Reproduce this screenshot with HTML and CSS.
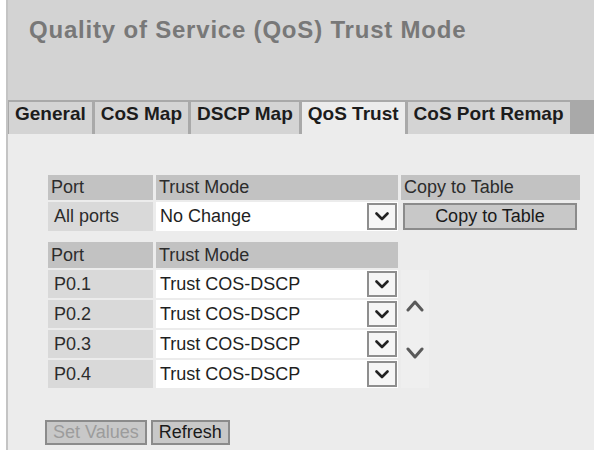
FILE: index.html
```html
<!DOCTYPE html>
<html lang="en">
<head>
<meta charset="utf-8">
<title>Quality of Service (QoS) Trust Mode</title>
<link rel="stylesheet" href="styles.css">
</head>
<body>
<div class="page">
  <header class="head">
    <h1 class="title">Quality of Service (QoS) Trust Mode</h1>
  </header>

  <nav class="tabs">
    <a class="tab">General</a>
    <a class="tab">CoS Map</a>
    <a class="tab">DSCP Map</a>
    <a class="tab active">QoS Trust</a>
    <a class="tab">CoS Port Remap</a>
  </nav>

  <main class="content">
    <div class="grid grid-all">
      <div class="th">Port</div>
      <div class="th">Trust Mode</div>
      <div class="th">Copy to Table</div>

      <div class="td port">All ports</div>
      <div class="td field">
        <div class="select"><span class="value">No Change</span><span class="arrow"><svg viewBox="0 0 14 9" width="14" height="9"><polyline points="1.5,1.5 7,7 12.5,1.5"/></svg></span></div>
      </div>
      <div class="td field">
        <button class="btn btn-copy" type="button">Copy to Table</button>
      </div>
    </div>

    <div class="grid grid-ports">
      <div class="th col-port">Port</div>
      <div class="th col-mode">Trust Mode</div>

      <div class="td port col-port">P0.1</div>
      <div class="td field col-mode">
        <div class="select"><span class="value">Trust COS-DSCP</span><span class="arrow"><svg viewBox="0 0 14 9" width="14" height="9"><polyline points="1.5,1.5 7,7 12.5,1.5"/></svg></span></div>
      </div>

      <div class="td port col-port">P0.2</div>
      <div class="td field col-mode">
        <div class="select"><span class="value">Trust COS-DSCP</span><span class="arrow"><svg viewBox="0 0 14 9" width="14" height="9"><polyline points="1.5,1.5 7,7 12.5,1.5"/></svg></span></div>
      </div>

      <div class="td port col-port">P0.3</div>
      <div class="td field col-mode">
        <div class="select"><span class="value">Trust COS-DSCP</span><span class="arrow"><svg viewBox="0 0 14 9" width="14" height="9"><polyline points="1.5,1.5 7,7 12.5,1.5"/></svg></span></div>
      </div>

      <div class="td port col-port">P0.4</div>
      <div class="td field col-mode">
        <div class="select"><span class="value">Trust COS-DSCP</span><span class="arrow"><svg viewBox="0 0 14 9" width="14" height="9"><polyline points="1.5,1.5 7,7 12.5,1.5"/></svg></span></div>
      </div>

      <div class="scroller">
        <svg class="chev" viewBox="0 0 18 13" width="18" height="13"><polyline points="2,11 9,3 16,11"/></svg>
        <svg class="chev" viewBox="0 0 18 13" width="18" height="13"><polyline points="2,2 9,10 16,2"/></svg>
      </div>
    </div>

    <div class="actions">
      <button class="btn" type="button" disabled>Set Values</button>
      <button class="btn" type="button">Refresh</button>
    </div>
  </main>
</div>
</body>
</html>
```

FILE: styles.css
```css
html, body {
  margin: 0;
  background: #ffffff;
}

body {
  font-family: "Liberation Sans", Arial, sans-serif;
  color: #2a2a2a;
}

.page {
  margin-left: 6px;
  border-left: 2px solid #c4c4c4;
  min-height: 450px;
  display: flex;
  flex-direction: column;
  background: #ececec;
}

/* page title band */
.head {
  height: 100px;
  box-sizing: border-box;
  padding: 17px 0 0 21px;
  background: #d3d3d3;
}

.title {
  margin: 0;
  font-size: 24px;
  line-height: 26px;
  font-weight: bold;
  letter-spacing: 0.8px;
  color: #787878;
}

/* tab strip */
.tabs {
  display: flex;
  gap: 3px;
  height: 34px;
  box-sizing: border-box;
  padding: 2px 0 0 1px;
  background: #a9a9a9;
}

.tab {
  padding: 1px 6px 0;
  line-height: 22px;
  font-size: 19px;
  font-weight: bold;
  color: #1c1c1c;
  background: #d4d4d4;
  cursor: pointer;
}

.tab.active {
  background: #ececec;
}

/* form area */
.content {
  flex: 1;
  padding: 41px 0 0 40px;
}

.grid {
  display: grid;
  column-gap: 3px;
  row-gap: 2px;
  font-size: 18px;
}

.grid-all {
  grid-template-columns: 105px 242px 179px;
  grid-template-rows: 25px 29px;
}

.grid-ports {
  margin-top: 11px;
  grid-template-columns: 105px 242px 28px;
  grid-template-rows: 26px repeat(4, 28px);
}

.col-port { grid-column: 1; }
.col-mode { grid-column: 2; }

.th {
  display: flex;
  align-items: center;
  padding-left: 3px;
  background: #c2c2c2;
  color: #2c2c2c;
}

.td {
  display: flex;
  align-items: center;
}

.td.port {
  padding-left: 6px;
  background: #d9d9d9;
  color: #2c2c2c;
}

.td.field {
  align-items: stretch;
}

/* drop-down control */
.select {
  flex: 1;
  display: flex;
  align-items: stretch;
  background: #ffffff;
}

.select .value {
  flex: 1;
  display: flex;
  align-items: center;
  padding-left: 4px;
  color: #1f1f1f;
  white-space: nowrap;
}

.select .arrow {
  width: 30px;
  margin: 1px 1px 1px 0;
  box-sizing: border-box;
  border: 2px solid #8e8e8e;
  background: #f6f6f6;
  display: flex;
  align-items: center;
  justify-content: center;
}

.select .arrow polyline {
  fill: none;
  stroke: #222222;
  stroke-width: 2.6;
  stroke-linecap: round;
  stroke-linejoin: round;
}

/* scroll arrows beside the port rows */
.scroller {
  grid-column: 3;
  grid-row: 2 / span 4;
  display: flex;
  flex-direction: column;
  align-items: center;
  padding-top: 29px;
  gap: 35px;
  background: #efefef;
}

.chev polyline {
  fill: none;
  stroke: #5a5a5a;
  stroke-width: 3;
  stroke-linecap: round;
  stroke-linejoin: round;
}

/* buttons */
.btn {
  height: 25px;
  padding: 0 6px;
  border: 2px solid #8b8b8b;
  background: #c8c8c8;
  font-family: inherit;
  font-size: 18px;
  line-height: 21px;
  color: #1a1a1a;
}

.btn:disabled {
  color: #9c9c9c;
}

.btn-copy {
  flex: 1;
  height: auto;
  margin: 1px 3px 1px 2px;
}

.actions {
  display: flex;
  gap: 4px;
  margin: 32px 0 0 -3px;
}
```
